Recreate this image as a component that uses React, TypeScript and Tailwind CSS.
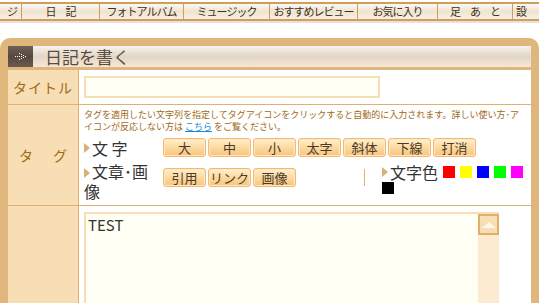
import React from 'react';

const navItems = [
  { label: 'ジ', width: 'w-[22px]', justify: 'justify-end pr-1' },
  { label: '日　記', width: 'w-[78px]', justify: 'justify-center' },
  { label: 'フォトアルバム', width: 'w-[84px]', justify: 'justify-center' },
  { label: 'ミュージック', width: 'w-[86px]', justify: 'justify-center' },
  { label: 'おすすめレビュー', width: 'w-[88px]', justify: 'justify-center' },
  { label: 'お気に入り', width: 'w-[80px]', justify: 'justify-center' },
  { label: '足　あ　と', width: 'w-[75px]', justify: 'justify-center' },
  { label: '設', width: 'w-[30px]', justify: 'justify-start pl-[3px]' },
];

const styleButtons = ['大', '中', '小', '太字', '斜体', '下線', '打消'];
const mediaButtons = ['引用', 'リンク', '画像'];
const colors = ['bg-[#ff0000]', 'bg-[#ffff00]', 'bg-[#0000ff]', 'bg-[#00ff00]', 'bg-[#ff00ff]', 'bg-[#000000]'];

const Arrow = () => (
  <span className="inline-block w-0 h-0 border-y-[5px] border-y-transparent border-l-[6px] border-l-[#d8b078] mr-[2px]" />
);

const TagButton: React.FC<{ label: string }> = ({ label }) => (
  <button className="w-[43px] h-[19px] flex items-center justify-center rounded-[3px] border border-[#f4b870] bg-gradient-to-b from-[#fff0d0] via-[#fcd9a0] to-[#f9c47c] text-[13px] leading-none text-[#4a3a28] shadow-[inset_0_0_0_1px_#fde8c4]">
    {label}
  </button>
);

const App: React.FC = () => {
  return (
    <div className="w-[539px] h-[303px] overflow-hidden bg-white font-['Noto_Sans_CJK_JP','Noto_Sans',sans-serif]">
      {/* Top navigation */}
      <div className="pt-[2px]">
        <div className="flex h-[19px] border-y-2 border-[#d29d5a] bg-gradient-to-b from-[#fbf8f2] via-[#efe4d2] to-[#f7efe2]">
          {navItems.map((item, i) => (
            <div
              key={i}
              className={`${item.width} shrink-0 flex items-center whitespace-nowrap overflow-hidden ${item.justify} text-[11px] tracking-[-1px] leading-none text-[#3c3020] ${i < navItems.length - 1 ? 'border-r border-[#d29d5a]' : ''}`}
            >
              {item.label}
            </div>
          ))}
        </div>
        <div className="h-[2px] bg-[#e6e3de]" />
      </div>

      {/* Diary panel */}
      <div className="mt-[15px] bg-[#dfb77c] rounded-t-[10px] px-[8px] pt-[8px]">
        <div className="flex h-[21px] bg-gradient-to-b from-[#f7f3ef] via-[#e2d6c6] to-[#f8e6d6]">
          <div className="w-[25px] h-full bg-gradient-to-b from-[#6e6058] via-[#56483e] to-[#6a5a4e] flex items-center justify-center">
            <svg width="11" height="7" viewBox="0 0 11 7" className="block">
              <rect x="0" y="3" width="1" height="1" fill="#fff" />
              <rect x="2" y="3" width="1" height="1" fill="#fff" />
              <rect x="4" y="3" width="1" height="1" fill="#fff" />
              <rect x="6" y="1" width="1" height="1" fill="#fff" />
              <rect x="6" y="5" width="1" height="1" fill="#fff" />
              <rect x="8" y="2" width="1" height="1" fill="#fff" />
              <rect x="8" y="4" width="1" height="1" fill="#fff" />
              <rect x="6" y="3" width="1" height="1" fill="#fff" />
              <rect x="10" y="3" width="1" height="1" fill="#fff" />
              <rect x="4" y="0" width="1" height="1" fill="#fff" />
              <rect x="4" y="6" width="1" height="1" fill="#fff" />
            </svg>
          </div>
          <div className="pl-[12px] flex items-center text-[17px] leading-none text-[#5a4a3e]">日記を書く</div>
        </div>
        <div className="h-[3px]" />

        <div className="bg-white">
          {/* Title row */}
          <div className="flex border-b border-[#e0b070]">
            <div className="w-[71px] shrink-0 bg-[#f7deb5] border-r border-[#e0b070] flex items-center justify-center text-[14px] text-[#a06a14] tracking-[1px]">
              タイトル
            </div>
            <div className="flex-1 pl-[5px] py-[6px]">
              <div className="w-[296px] h-[22px] bg-[#fffff4] border-2 border-[#f5dfb8]" />
            </div>
          </div>

          {/* Tag row */}
          <div className="flex border-b border-[#e0b070] h-[101px]">
            <div className="w-[71px] shrink-0 bg-[#f7deb5] border-r border-[#e0b070] flex items-center justify-center gap-[20px] text-[14px] text-[#a06a14]">
              <span>タ</span>
              <span>グ</span>
            </div>
            <div className="flex-1 pl-[5px] pt-[4px]">
              <p className="text-[9px] leading-[12px] text-[#a06a14] whitespace-nowrap">
                タグを適用したい文字列を指定してタグアイコンをクリックすると自動的に入力されます。詳しい使い方･ア
                <br />
                イコンが反応しない方は <span className="text-[#1a8ad0] underline">こちら</span> をご覧ください。
              </p>
              <div className="flex items-center mt-[5px]">
                <div className="w-[79px] flex items-center text-[16px] leading-none text-[#333]">
                  <Arrow />
                  文 字
                </div>
                <div className="flex gap-[2px]">
                  {styleButtons.map(b => (
                    <TagButton key={b} label={b} />
                  ))}
                </div>
              </div>
              <div className="flex items-start mt-[4px]">
                <div className="w-[79px] text-[16px] leading-[20px] text-[#333]">
                  <Arrow />
                  文章･画
                  <br />
                  像
                </div>
                <div className="flex gap-[2px] pt-[7px]">
                  {mediaButtons.map(b => (
                    <TagButton key={b} label={b} />
                  ))}
                </div>
                <div className="ml-[68px] mt-[8px] w-px h-[17px] bg-[#e0b070]" />
                <div className="ml-[17px] w-[146px] flex flex-wrap items-center gap-x-[5px] gap-y-[1px] pt-[2px] text-[16px] leading-[18px] text-[#333]">
                  <span className="flex items-center">
                    <Arrow />
                    文字色
                  </span>
                  {colors.map(c => (
                    <span key={c} className={`w-[12px] h-[12px] ${c}`} />
                  ))}
                </div>
              </div>
            </div>
          </div>

          {/* Body row */}
          <div className="flex h-[110px]">
            <div className="w-[71px] shrink-0 bg-[#f7deb5] border-r border-[#e0b070]" />
            <div className="flex-1 pl-[5px] pt-[6px]">
              <div className="w-[415px] h-[110px] flex bg-[#fffff4] border-t-2 border-l-2 border-[#f5dfb8]">
                <div className="flex-1 pl-[2px] pt-[2px] text-[15px] leading-[18px] text-[#333]">TEST</div>
                <div className="w-[21px] flex flex-col bg-[#fcebd0]">
                  <div className="w-[21px] h-[21px] bg-[#f7deb5] border-2 border-[#dfb06a] flex items-center justify-center">
                    <span className="w-0 h-0 border-x-[7px] border-x-transparent border-b-[6px] border-b-[#fff8ea]" />
                  </div>
                </div>
              </div>
            </div>
          </div>
        </div>
      </div>
    </div>
  );
};

export default App;
